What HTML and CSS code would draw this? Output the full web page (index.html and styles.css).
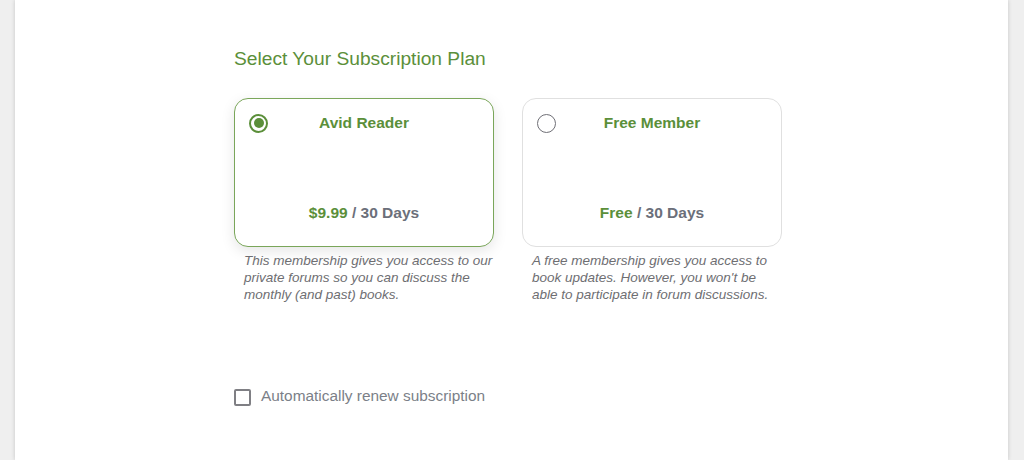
FILE: index.html
```html
<!DOCTYPE html>
<html>
<head>
<meta charset="utf-8">
<link rel="stylesheet" href="styles.css">
</head>
<body>
<div class="panel">
  <h2 class="title">Select Your Subscription Plan</h2>
  <div class="plans">
    <div class="plan">
      <div class="card selected">
        <div class="card-head">
          <span class="radio checked"></span>
          <span class="plan-name">Avid Reader</span>
          <span></span>
        </div>
        <div class="price"><span class="amount">$9.99</span> / 30 Days</div>
      </div>
      <p class="desc">This membership gives you access to our private forums so you can discuss the monthly (and past) books.</p>
    </div>
    <div class="plan">
      <div class="card">
        <div class="card-head">
          <span class="radio"></span>
          <span class="plan-name">Free Member</span>
          <span></span>
        </div>
        <div class="price"><span class="amount">Free</span> / 30 Days</div>
      </div>
      <p class="desc">A free membership gives you access to book updates. However, you won't be able to participate in forum discussions.</p>
    </div>
  </div>
  <label class="renew">
    <span class="checkbox"></span>
    <span class="renew-text">Automatically renew subscription</span>
  </label>
</div>
</body>
</html>
```

FILE: styles.css
```css
html, body {
  margin: 0;
  padding: 0;
  height: 100%;
}
body {
  background: #efefef;
  font-family: "Liberation Sans", Arial, sans-serif;
  overflow: hidden;
}
.panel {
  margin: 0 16px 0 15px;
  height: 100%;
  background: #fff;
  box-shadow: 0 0 4px rgba(0,0,0,0.18);
  padding: 48px 0 0 219px;
  box-sizing: border-box;
}
.title {
  margin: 0;
  font-size: 19.2px;
  line-height: 22px;
  font-weight: normal;
  color: #5b8f3a;
}
.plans {
  display: flex;
  gap: 28px;
  margin-top: 28px;
}
.plan {
  width: 260px;
}
.card {
  height: 149px;
  box-sizing: border-box;
  border: 1px solid #e0e0e0;
  border-radius: 14px;
  background: #fff;
  display: flex;
  flex-direction: column;
  padding: 14px 14px 24px 14px;
}
.card.selected {
  border-color: #7aa65a;
  box-shadow: 0 4px 14px rgba(0,0,0,0.10);
}
.card-head {
  display: grid;
  grid-template-columns: 1fr auto 1fr;
  align-items: center;
  height: 20px;
}
.radio {
  width: 19px;
  height: 19px;
  box-sizing: border-box;
  border: 1.6px solid #6f6f76;
  border-radius: 50%;
  display: flex;
  align-items: center;
  justify-content: center;
}
.radio.checked {
  border: 2px solid #5b8f3a;
}
.radio.checked::after {
  content: "";
  width: 10px;
  height: 10px;
  border-radius: 50%;
  background: #5b8f3a;
}
.plan-name {
  font-size: 15.5px;
  font-weight: bold;
  color: #5b8f3a;
}
.price {
  margin-top: auto;
  text-align: center;
  font-size: 15.5px;
  line-height: 18px;
  font-weight: bold;
  color: #6b6f7a;
}
.amount {
  color: #5b8f3a;
}
.desc {
  margin: 5px 0 0 10px;
  font-size: 13.5px;
  line-height: 17px;
  font-style: italic;
  color: #6e6e72;
}
.renew {
  display: flex;
  align-items: center;
  gap: 10px;
  margin-top: 82px;
}
.checkbox {
  width: 17px;
  height: 17px;
  box-sizing: border-box;
  border: 2px solid #7f7f84;
  border-radius: 2px;
  margin-top: 4px;
}
.renew-text {
  font-size: 15.4px;
  line-height: 18px;
  color: #7b7f88;
}
```
